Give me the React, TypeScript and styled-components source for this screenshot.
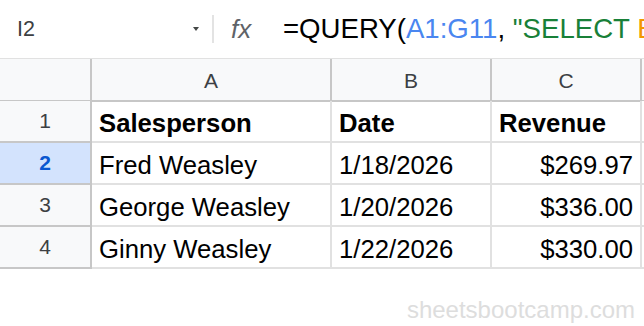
import { Fragment } from "react";
import styled, { createGlobalStyle } from "styled-components";

const GlobalStyle = createGlobalStyle`
  html, body {
    margin: 0;
    padding: 0;
    background: #ffffff;
    overflow: hidden;
  }
  body {
    font-family: "Liberation Sans", Arial, sans-serif;
  }
`;

const Page = styled.div`
  width: 644px;
  height: 326px;
  display: flex;
  flex-direction: column;
  overflow: hidden;
`;

const FormulaBar = styled.div`
  height: 58px;
  display: flex;
  align-items: center;
  border-bottom: 1px solid #e1e1e1;
  white-space: nowrap;
  overflow: hidden;
  & > * {
    flex-shrink: 0;
  }
`;

const NameBox = styled.div`
  width: 212px;
  box-sizing: border-box;
  padding: 0 13px 0 17px;
  display: flex;
  align-items: center;
  justify-content: space-between;
  font-size: 21.5px;
  color: #3c4043;
`;

const Caret = styled.span`
  width: 0;
  height: 0;
  border-left: 3.5px solid transparent;
  border-right: 3.5px solid transparent;
  border-top: 4px solid #444746;
`;

const Divider = styled.div`
  width: 2px;
  height: 28px;
  background: #e3e3e3;
`;

const Fx = styled.span`
  margin-left: 17px;
  width: 52px;
  font-size: 26px;
  font-style: italic;
  color: #5f6368;
`;

const Formula = styled.div`
  font-size: 27.6px;
  color: #000;
`;

const Token = styled.span<{ $tone?: string }>`
  color: ${(p) => p.$tone ?? "#000"};
`;

const Grid = styled.div`
  display: grid;
  grid-template-columns: 92px 240px 160px 150px 2px;
  grid-auto-rows: 42px;
`;

const Corner = styled.div`
  height: 43px;
  box-sizing: border-box;
  background: #f8f9fa;
  border-right: 2px solid #c7c7c7;
  border-bottom: 2px solid #c7c7c7;
`;

const ColHead = styled.div`
  height: 43px;
  box-sizing: border-box;
  background: #f8f9fa;
  border-right: 2px solid #c7c7c7;
  border-bottom: 2px solid #c7c7c7;
  display: flex;
  align-items: center;
  justify-content: center;
  padding-top: 2px;
  font-size: 21px;
  color: #3c4043;
`;

const RowHead = styled.div<{ $active?: boolean }>`
  box-sizing: border-box;
  background: ${(p) => (p.$active ? "#d3e3fd" : "#f8f9fa")};
  border-right: 2px solid #c7c7c7;
  border-bottom: 2px solid #c7c7c7;
  display: flex;
  align-items: center;
  justify-content: center;
  font-size: 21px;
  font-weight: ${(p) => (p.$active ? 700 : 400)};
  color: ${(p) => (p.$active ? "#0b57d0" : "#3c4043")};
`;

const Cell = styled.div<{ $bold?: boolean; $right?: boolean }>`
  box-sizing: border-box;
  border-right: 2px solid #e1e1e1;
  border-bottom: 2px solid #e1e1e1;
  display: flex;
  align-items: center;
  justify-content: ${(p) => (p.$right ? "flex-end" : "flex-start")};
  padding: 4px 7px 0 7px;
  font-size: 25.7px;
  font-weight: ${(p) => (p.$bold ? 700 : 400)};
  color: #000;
  white-space: nowrap;
  overflow: hidden;
`;

const Edge = styled.div<{ $head?: boolean }>`
  height: ${(p) => (p.$head ? "43px" : "auto")};
  box-sizing: border-box;
  background: ${(p) => (p.$head ? "#f8f9fa" : "#fff")};
  border-bottom: 2px solid ${(p) => (p.$head ? "#c7c7c7" : "#e1e1e1")};
`;

const Watermark = styled.div`
  margin-top: 29px;
  padding-right: 9px;
  text-align: right;
  font-size: 24px;
  line-height: 1;
  color: #dddddd;
`;

const rows = [
  { name: "Fred Weasley", date: "1/18/2026", revenue: "$269.97" },
  { name: "George Weasley", date: "1/20/2026", revenue: "$336.00" },
  { name: "Ginny Weasley", date: "1/22/2026", revenue: "$330.00" },
];

export default function App() {
  return (
    <Page>
      <GlobalStyle />
      <FormulaBar>
        <NameBox>
          I2
          <Caret />
        </NameBox>
        <Divider />
        <Fx>fx</Fx>
        <Formula>
          <Token>=QUERY(</Token>
          <Token $tone="#4a86f0">A1:G11</Token>
          <Token>, </Token>
          <Token $tone="#188038">"SELECT </Token>
          <Token $tone="#f29900">B</Token>
        </Formula>
      </FormulaBar>
      <Grid>
        <Corner />
        <ColHead>A</ColHead>
        <ColHead>B</ColHead>
        <ColHead>C</ColHead>
        <Edge $head />

        <RowHead>1</RowHead>
        <Cell $bold>Salesperson</Cell>
        <Cell $bold>Date</Cell>
        <Cell $bold>Revenue</Cell>
        <Edge />

        {rows.map((r, i) => (
          <Fragment key={r.name}>
            <RowHead $active={i === 0}>{i + 2}</RowHead>
            <Cell>{r.name}</Cell>
            <Cell>{r.date}</Cell>
            <Cell $right>{r.revenue}</Cell>
            <Edge />
          </Fragment>
        ))}
      </Grid>
      <Watermark>sheetsbootcamp.com</Watermark>
    </Page>
  );
}
